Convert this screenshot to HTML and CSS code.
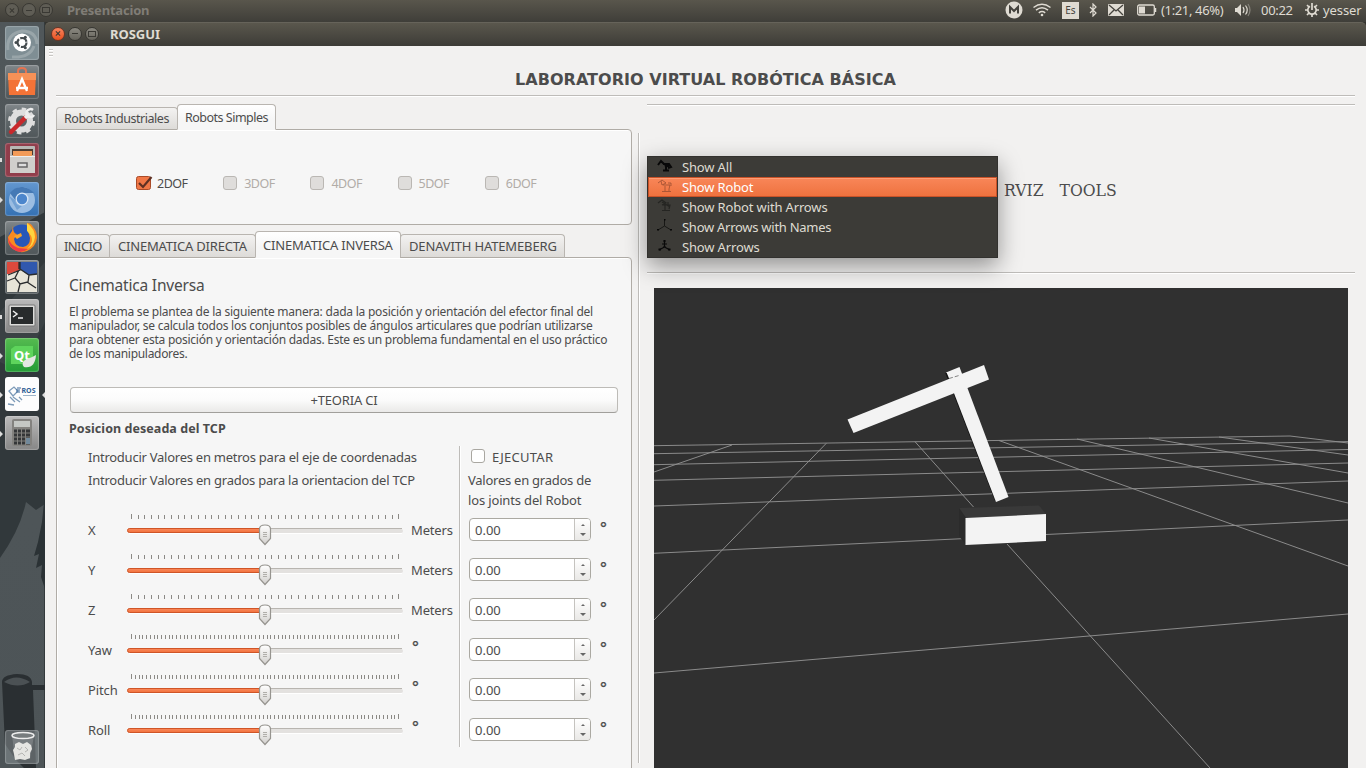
FILE: index.html
```html
<!DOCTYPE html>
<html lang="es">
<head>
<meta charset="utf-8">
<title>ROSGUI</title>
<link rel="stylesheet" href="styles.css">
</head>
<body>
<svg class="defs" width="0" height="0">
  <defs>
    <linearGradient id="thumb" x1="0" y1="0" x2="0" y2="1"><stop offset="0" stop-color="#fff"/><stop offset="1" stop-color="#d2d0cd"/></linearGradient>
    <linearGradient id="fill" x1="0" y1="0" x2="0" y2="1"><stop offset="0" stop-color="#fb8a5c"/><stop offset="1" stop-color="#f0703c"/></linearGradient>
    <symbol id="bar" viewBox="0 0 280 36">
      <rect x="2" y="16" width="275" height="4" rx="2" fill="#e3e1df"/>
      <path d="M3 15.500H276" stroke="#b8b5b0"/>
      <path d="M3 20.500H276" stroke="#fff"/>
      <rect x="1.500" y="15.500" width="136" height="4" rx="2" fill="url(#fill)" stroke="#cf5527"/>
      <path d="M133.500 16q0-4 5.500-4t5.500 4v9.500l-5.500 6-5.500-6z" fill="url(#thumb)" stroke="#96948f" stroke-width="1.200"/>
      <path d="M137 19.500h4M137 21.500h4M137 23.500h4" stroke="#b0aeaa"/>
    </symbol>
    <symbol id="coarse" viewBox="0 0 280 36">
      <path d="M5 4H273.500" stroke="#8b8985" stroke-width="4" stroke-dasharray="1 5.687" shape-rendering="crispEdges"/>
      <path d="M5.500 1v5M272.500 1v5" stroke="#8b8985"/>
    </symbol>
    <symbol id="fine" viewBox="0 0 280 36">
      <path d="M5 4H273.500" stroke="#8b8985" stroke-width="4" stroke-dasharray="1 2.764" shape-rendering="crispEdges"/>
      <path d="M5.500 1v5M272.500 1v5" stroke="#8b8985"/>
    </symbol>
  </defs>
</svg>

<header class="topbar">
  <div class="wm dim"><i class="x"></i><i class="min"></i><i class="max"></i></div>
  <span class="app">Presentacion</span>
  <div class="tray">
    <svg class="t-m" width="18" height="18"><circle cx="9" cy="9" r="8.500" fill="#dfdbd2"/><path d="M5 12.500V6l4 4 4-4v6.500" fill="none" stroke="#45433d" stroke-width="2"/></svg>
    <svg class="t-wifi" width="18" height="14" fill="none" stroke="#dfdbd2" stroke-width="1.500"><path d="M.5 4.500q8.500-6.500 17 0M3 7.200q6-4.700 12 0M5.800 9.800q3.200-2.400 6.400 0"/><circle cx="9" cy="12" r="1.300" fill="#dfdbd2" stroke="none"/></svg>
    <span class="t-es">Es</span>
    <svg class="t-bt" width="8" height="14" fill="none" stroke="#dfdbd2" stroke-width="1.200"><path d="M1 4l6 6-3 3V1l3 3-6 6"/></svg>
    <svg class="t-mail" width="16" height="12"><rect width="16" height="12" rx="1" fill="#dfdbd2"/><path d="M1 1l7 6 7-6M1 11l5-5M15 11l-5-5" fill="none" stroke="#45433d" stroke-width="1.300"/></svg>
    <svg class="t-bat" width="20" height="12"><rect x=".7" y="1" width="16.600" height="10" rx="1.500" fill="none" stroke="#dfdbd2" stroke-width="1.300"/><path d="M18.500 4v4" stroke="#dfdbd2" stroke-width="1.500"/><rect x="2" y="2.500" width="6" height="7" fill="#dfdbd2"/></svg>
    <span class="t-time">(1:21, 46%)</span>
    <svg class="t-vol" width="17" height="14"><path d="M1 5h2l4-4v12L3 9H1z" fill="#dfdbd2"/><path d="M9 4q2 3 0 6M11.500 2.500q3.500 4.500 0 9" fill="none" stroke="#dfdbd2" stroke-width="1.200"/><path d="M14 1q4 6 0 12" fill="none" stroke="#85827a" stroke-width="1.200"/></svg>
    <span class="t-clock">00:22</span>
    <svg class="t-gear" width="14" height="14" fill="none" stroke="#dfdbd2"><path d="M5 3.300a4.200 4.200 0 1 0 4 0" stroke-width="1.700"/><path d="M7 0v7M7 11v3M0 7h3M11 7h3M2 2l2 2M12 2l-2 2M2 12l2-2M12 12l-2-2" stroke-width="1.700"/></svg>
    <span class="t-user">yesser</span>
  </div>
</header>

<div class="desk">
<nav class="launcher">
  <svg class="scene" width="45" height="746"><path d="M0 215L45 190V482L36 488 26 480Q20 508 0 536z" fill="#31383b"/><path d="M0 290L45 240V300L20 350 0 340z" fill="#3a4144"/><path d="M45 470l-3 30-4 20-4 14 5-2-3 14 6-3-1 12 4 12z" fill="#2b3235"/><path d="M2 660q0-7 15-8 14 0 15 8v3h13v5H33l3 78H24l-8-8-11-16-1-20z" fill="#2a2f32"/><path d="M4 660q12-9 26 0-12 7-26 0" fill="#4b5154"/></svg>
  <div class="tile dash"><svg viewBox="0 0 34 34"><path d="M3 24Q1 8 17 5q14 0 15 13M7 31Q25 32 29 20" fill="none" stroke="#aab4b8" stroke-width="3" opacity=".6"/><circle cx="17" cy="16.500" r="9" fill="#fff"/><circle cx="17" cy="16.500" r="4.500" fill="none" stroke="#444b4e" stroke-width="2.200" stroke-dasharray="8 1.400"/><g fill="#444b4e"><circle cx="11" cy="16.500" r="1.500"/><circle cx="20.300" cy="11.300" r="1.500"/><circle cx="20.300" cy="21.700" r="1.500"/></g></svg></div>
  <div class="tile"><svg viewBox="0 0 34 34"><path d="M13 9V6q0-3 4-3t4 3v3" fill="none" stroke="#e67350" stroke-width="2"/><path d="M3 8h28l-1 22H4z" fill="#f37337"/><path d="M3 8h28v7H3z" fill="#f69157"/><path d="M12 26l5-12 5 12M11 23h12" fill="none" stroke="#fff" stroke-width="2.300"/></svg></div>
  <div class="tile"><svg viewBox="0 0 34 34"><circle cx="16.500" cy="17" r="8.500" fill="none" stroke="#dedede" stroke-width="6"/><circle cx="16.500" cy="17" r="12" fill="none" stroke="#dedede" stroke-width="3" stroke-dasharray="4.500 4.900"/><path d="M6 28L20 14" stroke="#c8292c" stroke-width="4.500" stroke-linecap="round"/><path d="M20 14l4-4" stroke="#eee" stroke-width="3.500"/><path d="M28 6a4 4 0 1 0 1 5" fill="none" stroke="#eee" stroke-width="2.500"/></svg></div>
  <div class="tile red"><svg viewBox="0 0 34 34"><rect x="5" y="3" width="25" height="27" rx="1" fill="#b8b7b4"/><path d="M5 13h25v17H5z" fill="#d0cfcc"/><path d="M7 6h21v6H7z" fill="#4d3b30"/><path d="M8 8h19v5H8z" fill="#f39b58"/><path d="M5 13.500h25" stroke="#eee"/><rect x="13" y="20" width="9" height="4" fill="#ddd" stroke="#666" stroke-width="1.500"/></svg></div>
  <div class="tile blue"><svg viewBox="0 0 34 34"><circle cx="17" cy="18" r="13" fill="#9bbde2"/><path d="M5 11q5-7 13-6 7 1 11 6H17q-6 0-6 8z" fill="#4579b5"/><path d="M4 14l8 14 5-4q-6 0-7-6z" fill="#73a1d3"/><circle cx="17" cy="17" r="6.500" fill="#d9e7f6"/><circle cx="17" cy="17" r="5.200" fill="#4c86cc"/></svg></div>
  <div class="tile"><svg viewBox="0 0 34 34"><circle cx="17" cy="17" r="13.500" fill="#2757b8"/><path d="M8 5l-1 5-4 6q-1 8 5 12 7 5 14 2 9-4 10-13 0-7-4-11-2-4-6-4 2 4 1 8l2 7q0 8-7 9-8 0-9-8l3-5q-4 0-4-8z" fill="#f88a20"/><path d="M22 2q8 6 8 14-1 9-8 12 10-9 0-18z" fill="#ffd43f"/><path d="M3 16q2 8 10 11l10 1q-8 6-15 0-5-4-5-12z" fill="#ee3c48"/><path d="M9 15l7-3 1 3-5 3z" fill="#f9a32b"/></svg></div>
  <div class="tile"><svg viewBox="0 0 34 34"><rect x="2" y="2" width="30" height="30" fill="#e7e4d8"/><path d="M2 2h13v8L4 14H2z" fill="#dc493c"/><path d="M15 2h17v12l-9 1-8-6z" fill="#3058ae"/><path d="M15 2v8L3 15M15 9l9 6 8-1M14 10l-4 8 5 6 8-2 1-7M10 18l-8 3M15 24l-2 8M22 22l9 6M14 2v7" fill="none" stroke="#292b2d" stroke-width="1.300"/></svg></div>
  <div class="tile gray"><svg viewBox="0 0 34 34"><rect x="4" y="6" width="26" height="21" rx="1" fill="#dcdcda" stroke="#777"/><path d="M6 8h22v17H6z" fill="#282b2c"/><path d="M8 12l4 3-4 3M13 19h5" fill="none" stroke="#eee" stroke-width="1.500"/></svg></div>
  <div class="tile green"><svg viewBox="0 0 34 34"><path d="M6 11l4-3h18v13l-5 5H6z" fill="#5ed45c"/><text x="9" y="22" class="qt">Qt</text><path d="M31 17q-1 14-12 12-4-5 3-8 6-2 9-4z" fill="#e3e7e2"/></svg></div>
  <div class="tile white"><svg viewBox="0 0 34 34"><path d="M4 14l5-4 4 4-5 5zM5 20l5 5M8 20l7 5M3 27l6 1M14 20l3 3" fill="none" stroke="#7d9bb8" stroke-width="1.300"/><path d="M12 11h4M11 13h4M11 15h4" stroke="#39689c" stroke-width="1.200"/><text x="16.500" y="16" class="ros">ROS</text><path d="M18 18.500h13" stroke="#9db4c9"/></svg></div>
  <div class="tile gray"><svg viewBox="0 0 34 34"><rect x="7" y="3" width="20" height="27" rx="2" fill="#83827f"/><rect x="9" y="5" width="16" height="6" fill="#c4c7c4"/><path d="M9 15h3m1 0h3m1 0h3m1 0h4M9 19h3m1 0h3m1 0h3m1 0h4M9 23h3m1 0h3m1 0h3m1 0h4M9 27h3m1 0h3m1 0h3m1 0h4" stroke="#343638" stroke-width="3"/><path d="M21 22h4v6h-4z" fill="#71899b"/></svg></div>
  <svg class="pips" width="45" height="440"><path d="M0 136h2v4H0zM0 293h2v4H0z" fill="#ddd"/><path d="M0 175l3 3-3 3zM0 331l3 3-3 3zM0 370l3 3-3 3zM0 409l3 3-3 3zM45 370l-3 3 3 3z" fill="#ddd"/></svg>
  <div class="tile trash"><svg viewBox="0 0 34 34"><path d="M7 5l3 24h15l4-24z" fill="#84898b" opacity=".7"/><ellipse cx="18" cy="5.500" rx="11" ry="3" fill="#777c7e" stroke="#eee" stroke-width="1.500"/><path d="M10 14l4-2 4 2 4-2 4 3 1 4-2 4v5l-5 2-5-1-5 1-1-6-1-4 2-3z" fill="#e5e5e2"/><path d="M12 18l3 2 2-3M20 17l3 3-3 2M13 25l4-2 3 3" fill="none" stroke="#b4b4b2"/></svg></div>
</nav>

<section class="window">
  <div class="titlebar"><div class="wm"><i class="x close"></i><i class="min"></i><i class="max"></i></div><span>ROSGUI</span></div>
  <main>
    <i class="grip"></i>
    <h1>LABORATORIO VIRTUAL ROBÓTICA BÁSICA</h1>
    <div class="cols">
      <div class="left">
        <div class="tabs"><span class="tab w1"><b class="l1">Robots Industriales</b></span><span class="tab on w2"><b class="l2">Robots Simples</b></span></div>
        <div class="panel dofs">
          <label class="cb"><svg class="chk" width="17" height="16"><rect x=".5" y="1.500" width="14" height="13" rx="2" fill="#f07746" stroke="#a94a27"/><path d="M3 8l4 4 8.500-10" fill="none" stroke="#5f3022" stroke-width="2.200"/></svg><b>2DOF</b></label>
          <label class="cb off"><i></i><b>3DOF</b></label>
          <label class="cb off"><i></i><b>4DOF</b></label>
          <label class="cb off"><i></i><b>5DOF</b></label>
          <label class="cb off"><i></i><b>6DOF</b></label>
        </div>
        <div class="tabs second"><span class="tab w3"><b class="l3">INICIO</b></span><span class="tab w4"><b class="l4">CINEMATICA DIRECTA</b></span><span class="tab on w5"><b class="l4">CINEMATICA INVERSA</b></span><span class="tab w6"><b class="l6">DENAVITH HATEMEBERG</b></span></div>
        <div class="panel body">
          <h2>Cinematica Inversa</h2>
          <p class="desc"><span class="d1">El problema se plantea de la siguiente manera: dada la posición y orientación del efector final del</span><br><span class="d2">manipulador, se calcula todos los conjuntos posibles de ángulos articulares que podrían utilizarse</span><br><span class="d2">para obtener esta posición y orientación dadas. Este es un problema fundamental en el uso práctico</span><br><span class="d4">de los manipuladores.</span></p>
          <div class="btn"><b>+TEORIA CI</b></div>
          <h3>Posicion deseada del TCP</h3>
          <div class="form">
            <div class="sliders">
              <p class="i1">Introducir Valores en metros para el eje de coordenadas</p>
              <p class="i2">Introducir Valores en grados para la orientacion del TCP</p>
              <div class="row"><b>X</b><svg width="280" height="36"><use href="#coarse"/><use href="#bar"/></svg><em>Meters</em></div>
              <div class="row"><b>Y</b><svg width="280" height="36"><use href="#coarse"/><use href="#bar"/></svg><em>Meters</em></div>
              <div class="row"><b>Z</b><svg width="280" height="36"><use href="#coarse"/><use href="#bar"/></svg><em>Meters</em></div>
              <div class="row"><b>Yaw</b><svg width="280" height="36"><use href="#fine"/><use href="#bar"/></svg><em class="deg">°</em></div>
              <div class="row"><b>Pitch</b><svg width="280" height="36"><use href="#fine"/><use href="#bar"/></svg><em class="deg">°</em></div>
              <div class="row"><b>Roll</b><svg width="280" height="36"><use href="#fine"/><use href="#bar"/></svg><em class="deg">°</em></div>
            </div>
            <div class="joints">
              <label class="cb run"><i></i><b>EJECUTAR</b></label>
              <p class="v1">Valores en grados de</p>
              <p class="v2">los joints del Robot</p>
              <div class="row"><span class="spin">0.00<i></i></span><em class="deg">°</em></div>
              <div class="row"><span class="spin">0.00<i></i></span><em class="deg">°</em></div>
              <div class="row"><span class="spin">0.00<i></i></span><em class="deg">°</em></div>
              <div class="row"><span class="spin">0.00<i></i></span><em class="deg">°</em></div>
              <div class="row"><span class="spin">0.00<i></i></span><em class="deg">°</em></div>
              <div class="row"><span class="spin">0.00<i></i></span><em class="deg">°</em></div>
            </div>
          </div>
        </div>
      </div>
      <div class="vline"></div>
      <div class="right">
        <div class="menubar"><span>RVIZ</span><span>TOOLS</span></div>
        <svg class="view" width="694" height="480" viewBox="654 288 694 480">
          <rect x="654" y="288" width="694" height="480" fill="#303030"/>
          <g fill="none" stroke="#8f8f8f" stroke-width=".95">
            <path d="M654 445.700L1290 436M654 453.700L1348 441.600M654 464.700L1348 449.500M654 480.300L1348 463M654 506L1348 481M654 553.300L962 538.700M1046 534.500L1348 520M654 673L1348 614"/>
            <path d="M732 445L654 472M826.300 443.300L654 620M915 441.700L973.500 507M1007 544L1210 768M999 440.500L1348 566M1077 439L1348 503M1149 438L1348 473M1219 437L1348 455M1290 436L1348 443"/>
          </g>
          <path d="M959 508L1039 505.500 1046 514 966 518z" fill="#393939"/><path d="M959 508l7 10v27l-7-9z" fill="#2b2b2b"/>
          <path d="M965.500 518L1046 514V541L965.500 545z" fill="#f3f3f3"/>
          <path d="M953 393L962 391 1000 498 995 501z" fill="#111"/>
          <path d="M946 372.500L959.500 367 1008.500 497 996 502z" fill="#f3f3f3"/>
          <path d="M946 373l2.500 6" stroke="#111" stroke-width="1.500"/>
          <path d="M847.500 419.500L984 365 989 379.500 853.500 433z" fill="#f3f3f3"/><path d="M949 378.500l10-3" stroke="#777" stroke-width=".9" stroke-dasharray="4 2"/>
        </svg>
        <div class="menu">
          <div class="mi"><svg width="16" height="14"><path d="M1 6l3-4 3 3M6 5h6l2 3-3 1M9 6v5M6 11.500h6" fill="none" stroke="#080808" stroke-width="2"/><path d="M7 5h5v3H8z" fill="#080808"/></svg><b>Show All</b></div>
          <div class="mi sel"><svg width="16" height="14"><path d="M1 4l4-3 4 3-4 2-1-4M6 6h7l-1 4v2M8 7v5M5 12.500h9M11 4h3v3" fill="none" stroke="#9c4d31" stroke-opacity=".8"/></svg><b>Show Robot</b></div>
          <div class="mi"><svg width="16" height="14"><path d="M1 4l4-3 4 3-4 2M5 6h8l-1 4M8 6v5M5 11.500h8M5 3l8 5M11 3v4" fill="none" stroke="#252522" stroke-width="1.200"/></svg><b>Show Robot with Arrows</b></div>
          <div class="mi"><svg width="16" height="14"><path d="M7.500 1v6L1 11M7.500 7L14 11" fill="none" stroke="#171715"/><path d="M7 0h1.500v1.500H7zM0 10h2v1.500H0zM13 10h2v1.500h-2z" fill="#080808"/></svg><b class="m4">Show Arrows with Names</b></div>
          <div class="mi"><svg width="16" height="14"><path d="M7.500 1v7L2 11M7.500 8L13 11M5 5h5M6 8h3" fill="none" stroke="#080808" stroke-width="1.200"/><path d="M6.500 1h2v2h-2zM1.500 9.500h2.500v2H1.500zM11 9.500h2.500v2H11z" fill="#080808"/></svg><b>Show Arrows</b></div>
        </div>
      </div>
    </div>
  </main>
</section>
</div>
</body>
</html>
```
FILE: styles.css
```css
* { box-sizing: border-box; }
body { margin: 0; width: 1366px; height: 768px; overflow: hidden; font: 13px/20px "Noto Sans", "Open Sans", sans-serif; color: #4c4c4c; background: #f2f1f0; }
b, em, i { font-weight: normal; font-style: normal; }
b, em, p, span { white-space: nowrap; }
h1, h2, h3, p { margin: 0; }
svg { display: block; flex: none; }
.defs { position: absolute; }

.topbar { height: 22px; display: flex; align-items: center; background: linear-gradient(#59564c, #3f3e39); color: #dfdbd2; padding: 0 0 2px 5px; }
.wm { display: flex; gap: 3px; }
.wm i { width: 14px; height: 14px; border-radius: 50%; background: linear-gradient(#8b8981, #65635b); border: 1px solid #383732; display: grid; place-items: center; }
.wm i::before { content: ""; width: 6px; height: 1px; background: #3a3934; }
.wm .max::before { height: 4px; background: none; border: 1px solid #3a3934; }
.wm .x::before { transform: rotate(45deg); }
.wm .x::after { content: ""; grid-area: 1 / 1; width: 6px; height: 1px; background: #3a3934; transform: rotate(-45deg); }
.wm .x::before { grid-area: 1 / 1; }
.wm .close { background: linear-gradient(#f88560, #e8501f); border-color: #6d3424; }
.dim i { background: #5f5d55; }
.app { margin-left: 14px; font-weight: bold; color: #807d76; letter-spacing: -.2px; }
.tray { margin-left: auto; display: flex; align-items: center; height: 22px; width: 361px; }
.t-wifi { margin-left: 10px; }
.t-es { margin-left: 11px; width: 17px; height: 17px; background: #dfdbd2; color: #45433d; font-size: 10px; line-height: 17px; text-align: center; }
.t-bt { margin-left: 10px; }
.t-mail { margin-left: 11px; }
.t-bat { margin-left: 13px; }
.t-time { margin-left: 4px; width: 63px; letter-spacing: -.35px; }
.t-vol { margin-left: 10px; }
.t-clock { margin-left: 10px; width: 33px; letter-spacing: -.3px; }
.t-gear { margin-left: 11px; }
.t-user { margin-left: 4px; letter-spacing: -.1px; }

.desk { display: flex; height: 746px; background: #35342f; }
.launcher { width: 45px; height: 746px; padding: 4px 0 4px 5px; display: flex; flex-direction: column; gap: 5px; position: relative; background: linear-gradient(#50575a, #4d5457); border-right: 1px solid #343a3c; }
.scene, .pips { position: absolute; left: 0; top: 0; }
.tile { width: 34px; height: 34px; flex: none; border-radius: 3px; position: relative; background: linear-gradient(#81878a, #5e6669 50%, #50575a); box-shadow: inset 0 0 1px 1px rgba(255,255,255,.22); }
.tile svg { width: 34px; height: 34px; }
.dash { background: #7f8e94; }
.red { background: #913d4b; }
.blue { background: linear-gradient(#6397cf, #3471b3); }
.gray { background: linear-gradient(#bababa, #868686); }
.green { background: linear-gradient(#55bb50, #239c35); }
.white { background: #fdfdfd; }
.trash { margin-top: auto; background: rgba(135,142,146,.55); }
.qt { font: bold 13px "Noto Sans", sans-serif; fill: #fff; }
.ros { font: bold 7px "Noto Sans", sans-serif; fill: #2f5f95; }

.window { width: 1321px; display: flex; flex-direction: column; }
.titlebar { height: 24px; background: linear-gradient(#5a574d, #3d3c37); border-top: 1px solid #66635a; border-radius: 5px 5px 0 0; display: flex; align-items: center; padding: 0 0 2px 6px; color: #dfdbd2; font-weight: bold; }
.titlebar span { margin-left: 11px; letter-spacing: -.05px; }
main { height: 722px; position: relative; background: #f2f1f0; }
.grip { position: absolute; left: 4px; top: 3px; width: 4px; height: 8px; background: repeating-linear-gradient(#c9c7c4 0 1px, #fff 1px 2px, transparent 2px 3px); }
h1 { height: 51px; margin: 0 11px; padding-top: 22px; font: bold 16px/24px "DejaVu Sans", sans-serif; letter-spacing: .03px; text-align: center; border-bottom: 1px solid #fff; box-shadow: inset 0 -1px #bebcb9; }
.cols { display: flex; padding-left: 11px; height: 671px; }
.left { width: 576px; padding-top: 7px; }
.tabs { display: flex; align-items: flex-end; height: 26px; position: relative; margin-bottom: -1px; }
.tab { height: 23px; border: 1px solid #b9b5b0; border-bottom: 1px solid #b0aca6; border-radius: 4px 4px 0 0; background: linear-gradient(#f3f2f1, #dddbd8); padding: 0 0 0 7px; margin-left: -1px; flex: none; }
.tab:first-child { margin-left: 0; }
.tab.on { height: 26px; background: linear-gradient(#fff, #f6f6f6 60%); border-bottom-color: #f6f6f6; padding-top: 2px; }
.w1 { width: 122px; } .w2 { width: 99px; }
.w3 { width: 54px; } .w4 { width: 147px; } .w5 { width: 146px; } .w6 { width: 165px; }
.tab.w4, .tab.w6 { padding-left: 8px; }
.l1 { font-size: 12.500px; letter-spacing: -.47px; }
.l2 { font-size: 12.500px; letter-spacing: -.5px; }
.l3 { letter-spacing: -.6px; }
.l4 { letter-spacing: -.2px; }
.l6 { letter-spacing: -.15px; }
.panel { border: 1px solid #b0aca6; border-radius: 0 4px 4px 4px; background: #f6f6f6; box-shadow: inset 1px 1px #fff; }
.dofs { height: 96px; padding: 43px 0 0 79px; display: flex; }
.cb { display: flex; align-items: center; height: 20px; }
.dofs .cb { width: 87.200px; }
.dofs b { font-size: 12.500px; letter-spacing: -.5px; padding-top: 1px; }
.cb i { width: 14px; height: 14px; border: 1px solid #bab7b3; border-radius: 3px; background: #dfdddb; margin-right: 7px; }
.chk { margin-right: 4px; }
.off { color: #b1aca7; }
.off i { margin-top: -1px; }
.second { height: 27px; margin-top: 6px; }
.second .tab { height: 24px; padding-top: 1px; }
.second .tab.on { height: 27px; padding-top: 3px; }
.body { height: 540px; border-radius: 0 4px 0 0; padding: 17px 13px 0 12px; }
h2 { font-size: 15.500px; font-weight: normal; line-height: 20px; letter-spacing: -.2px; }
.desc { font-size: 12px; line-height: 14px; margin-top: 10px; }
.d1 { letter-spacing: -.225px; }
.d2 { letter-spacing: -.25px; }
.d4 { letter-spacing: -.3px; }
.btn { margin: 26px 0 0 1px; width: 548px; height: 26px; border: 1px solid #bdbbb7; border-bottom-color: #a19f9b; border-radius: 4px; background: linear-gradient(#fff, #fbfbfb 50%, #eae9e8); text-align: center; line-height: 25px; letter-spacing: -.2px; }
h3 { font-size: 12.500px; line-height: 20px; margin-top: 6px; letter-spacing: .06px; }
.form { display: flex; margin-top: 7px; }
.sliders { width: 391px; height: 301px; padding-left: 19px; border-right: 1px solid #bebcb9; box-shadow: 1px 0 #fff; }
.sliders p { height: 23px; line-height: 23px; letter-spacing: -.25px; }
.sliders .row { display: flex; height: 40px; }
.sliders .i2 { margin-bottom: 21px; letter-spacing: -.24px; }
.row b { width: 38px; padding-top: 9px; margin-top: -2px; letter-spacing: -.1px; }
.row em { margin: 7px 0 0 5px; letter-spacing: -.15px; }
.row .deg { font-size: 16px; margin: 5px 0 0 6px; line-height: 20px; -webkit-text-stroke: .3px #4c4c4c; }
.sliders .row .deg { margin-top: 4px; }
.joints { padding-left: 8px; }
.joints .cb { height: 22px; padding-left: 3px; }
.run i { background: #fff; border-color: #a9a7a1; margin-top: -3px; }
.run b { letter-spacing: .25px; }
.joints p { line-height: 20px; }
.joints p.v1 { margin-top: 2px; letter-spacing: -.25px; }
.joints .row { height: 40px; display: flex; }
.joints .v2 { margin-bottom: 8px; letter-spacing: -.15px; }
.spin { width: 122px; height: 23px; margin-left: 1px; border: 1px solid #aba9a2; border-radius: 4px; background: #fff; display: flex; justify-content: space-between; padding-left: 5px; line-height: 22px; overflow: hidden; }
.spin i { width: 16px; border-left: 1px solid #c5c3bf; background: linear-gradient(#fff, #e9e8e6); display: flex; flex-direction: column; align-items: center; justify-content: space-between; padding: 5px 0 4px; }
.spin i::before, .spin i::after { content: ""; border: 2px solid transparent; border-top: 0; border-bottom: 2px solid #666; }
.spin i::after { border-width: 3px 3px 0; border-style: solid; border-color: #666 transparent transparent; }
.joints .row .deg { margin: 0 0 0 9px; }
.vline { width: 2px; height: 630px; margin: 36px 7px 0 6px; background: linear-gradient(90deg, #bebcb9 50%, #fff 50%); }
.right { width: 708px; position: relative; padding-top: 7px; }
.menubar { height: 169px; border-top: 1px solid #bebcb9; border-bottom: 1px solid #bebcb9; box-shadow: 0 1px #fff, inset 0 1px #fff; padding: 73px 0 0 357px; display: flex; gap: 16px; font: 17.400px/24px "DejaVu Serif Condensed", "DejaVu Serif", serif; }
.view { margin: 15px 0 0 7px; }
.menu { position: absolute; left: 0; top: 59px; width: 351px; height: 102px; background: #3c3b37; border: 1px solid #32312e; box-shadow: 0 8px 22px rgba(0,0,0,.4); color: #dfdbd2; letter-spacing: -.15px; }
.mi { height: 20px; display: flex; padding-left: 9px; gap: 9px; line-height: 20px; }
.m4 { letter-spacing: -.27px; }
.mi svg { margin-top: 2px; }
.sel { background: linear-gradient(#f9875a, #ee713d); box-shadow: inset 0 0 0 1px #c95228, inset 0 2px #ff9d74; color: #fff; }
```
